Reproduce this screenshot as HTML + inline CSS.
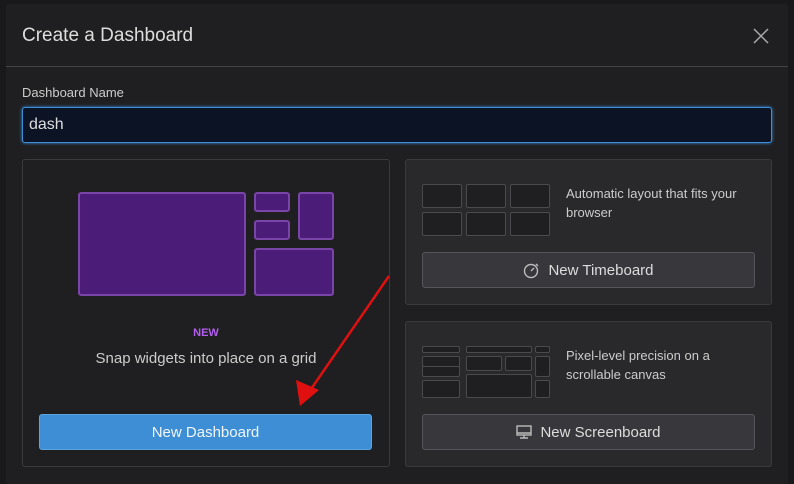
<!DOCTYPE html>
<html><head><style>
*{box-sizing:border-box;margin:0;padding:0}
body{width:794px;height:480px;background:#19191b;font-family:"Liberation Sans",sans-serif;position:relative;overflow:hidden;color:#ccc}
.a{position:absolute}
.modal{left:6px;top:4px;width:782px;height:480px;background:#1f1f21;border-radius:3px}
.card{background:#29292c;border:1px solid #3a3a3e;border-radius:3px}
.btn{background:#38373c;border:1px solid #55545a;border-radius:3px;color:#ddd;font-size:15px;display:flex;align-items:center;justify-content:center;gap:8px}
.p{background:#4b1d78;border:2px solid #7a45a8;border-radius:3px}
.g{background:#1f1f21;border:1px solid #4a4a4e;border-radius:2px}
.t{font-size:13px;color:#ccc;line-height:19px}
</style></head><body>
<div class="a modal"></div>
<div class="a" style="left:22px;top:25px;font-size:19px;color:#ddd">Create a Dashboard</div>
<svg class="a" style="left:753px;top:28px" width="16" height="16"><path d="M1 1L15 15M15 1L1 15" stroke="#aaa" stroke-width="1.5"/></svg>
<div class="a" style="left:6px;top:66px;width:782px;height:1px;background:#444"></div>
<div class="a" style="left:22px;top:85px;font-size:13px;color:#ccc">Dashboard Name</div>
<div class="a" style="left:22px;top:107px;width:750px;height:36px;background:#0b1325;border:1px solid #3b8ed8;border-radius:3px;box-shadow:0 0 3px #3b8ed8;font-size:16px;color:#ddd;padding:8px 6px">dash</div>

<div class="a" style="left:22px;top:159px;width:368px;height:308px;background:#1f1f21;border:1px solid #3a3a3e;border-radius:3px"></div>
<div class="a p" style="left:78px;top:192px;width:168px;height:104px"></div>
<div class="a p" style="left:254px;top:192px;width:36px;height:20px"></div>
<div class="a p" style="left:254px;top:220px;width:36px;height:20px"></div>
<div class="a p" style="left:298px;top:192px;width:36px;height:48px"></div>
<div class="a p" style="left:254px;top:248px;width:80px;height:48px"></div>
<div class="a" style="left:22px;top:327px;width:368px;text-align:center;font-size:11px;font-weight:bold;color:#b45ef0">NEW</div>
<div class="a" style="left:22px;top:350px;width:368px;text-align:center;font-size:15px;color:#ccc">Snap widgets into place on a grid</div>
<div class="a" style="left:39px;top:414px;width:333px;height:36px;background:#3d8ed4;border:1px solid #5aa4e4;border-radius:3px;color:#f2f6fa;font-size:15px;display:flex;align-items:center;justify-content:center">New Dashboard</div>

<div class="a card" style="left:405px;top:159px;width:367px;height:146px"></div>
<div class="a g" style="left:422px;top:184px;width:40px;height:24px"></div>
<div class="a g" style="left:466px;top:184px;width:40px;height:24px"></div>
<div class="a g" style="left:510px;top:184px;width:40px;height:24px"></div>
<div class="a g" style="left:422px;top:212px;width:40px;height:24px"></div>
<div class="a g" style="left:466px;top:212px;width:40px;height:24px"></div>
<div class="a g" style="left:510px;top:212px;width:40px;height:24px"></div>
<div class="a t" style="left:566px;top:184px;width:200px">Automatic layout that fits your browser</div>
<div class="a btn" style="left:422px;top:252px;width:333px;height:36px"><svg width="17" height="17" viewBox="0 0 17 17"><circle cx="8" cy="9" r="6.5" fill="none" stroke="#bbb" stroke-width="1.4"/><path d="M8 9L11 6M13 2l2 2" stroke="#bbb" stroke-width="1.4"/></svg>New Timeboard</div>

<div class="a card" style="left:405px;top:321px;width:367px;height:146px"></div>
<div class="a g" style="left:422px;top:346px;width:38px;height:7px"></div>
<div class="a g" style="left:466px;top:346px;width:66px;height:7px"></div>
<div class="a g" style="left:535px;top:346px;width:15px;height:7px"></div>
<div class="a g" style="left:422px;top:356px;width:38px;height:11px"></div>
<div class="a g" style="left:422px;top:366px;width:38px;height:11px"></div>
<div class="a g" style="left:466px;top:356px;width:36px;height:15px"></div>
<div class="a g" style="left:505px;top:356px;width:27px;height:15px"></div>
<div class="a g" style="left:535px;top:356px;width:15px;height:21px"></div>
<div class="a g" style="left:422px;top:380px;width:38px;height:18px"></div>
<div class="a g" style="left:466px;top:374px;width:66px;height:24px"></div>
<div class="a g" style="left:535px;top:380px;width:15px;height:18px"></div>
<div class="a t" style="left:566px;top:346px;width:200px">Pixel-level precision on a scrollable canvas</div>
<div class="a btn" style="left:422px;top:414px;width:333px;height:36px"><svg width="16" height="16" viewBox="0 0 16 16"><rect x="1" y="2" width="14" height="9" fill="none" stroke="#bbb" stroke-width="1.4"/><path d="M1 9h14M8 11v3M4 14h8" stroke="#bbb" stroke-width="1.4"/></svg>New Screenboard</div>

<svg class="a" style="left:0;top:0" width="794" height="480"><path d="M389 276L309 392" stroke="#e01010" stroke-width="2.5"/><path d="M300 406L296 380L319 390Z" fill="#e01010"/></svg>
</body></html>
